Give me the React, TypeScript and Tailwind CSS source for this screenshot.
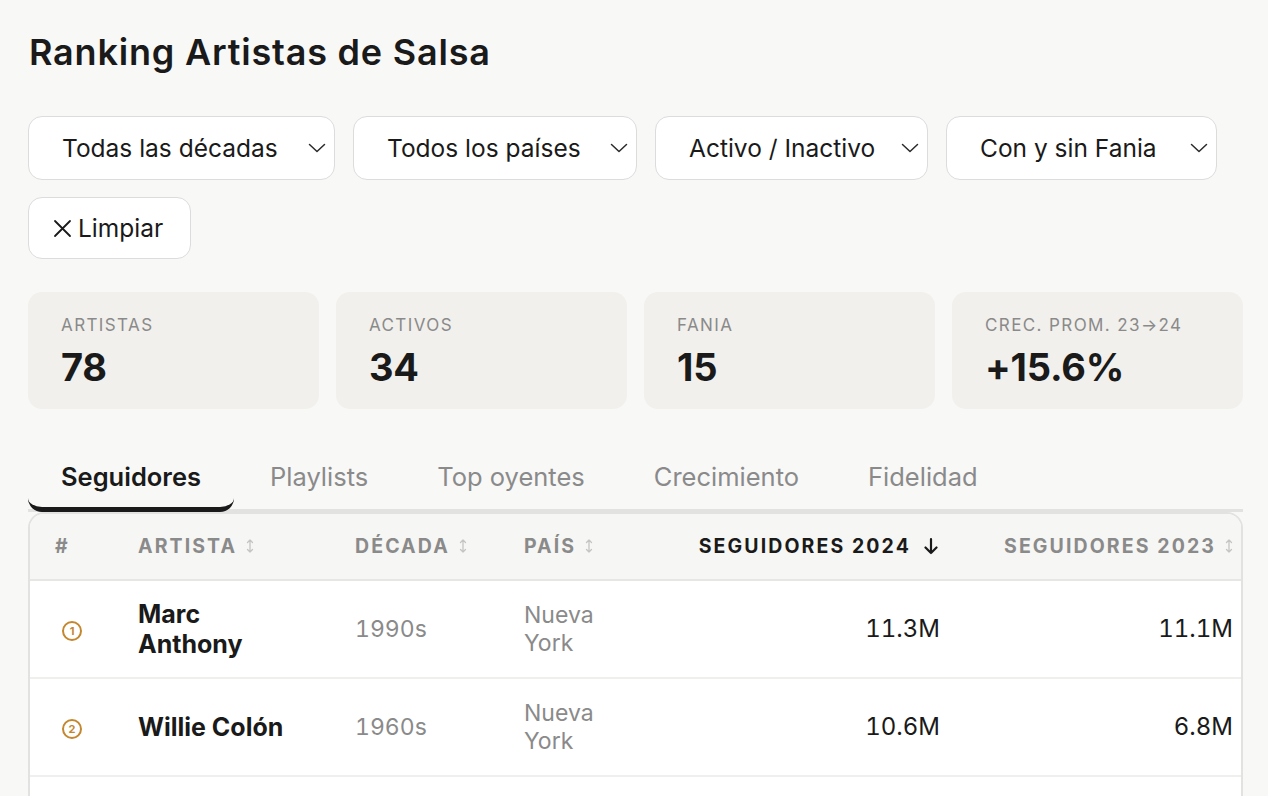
import React from "react";

const Chevron = () => (
  <svg width="18" height="10" viewBox="0 0 18 10" fill="none" className="shrink-0">
    <path d="M1.5 1.5 L9 8.5 L16.5 1.5" stroke="#2a2a2a" strokeWidth="1.5" strokeLinecap="round" strokeLinejoin="round" />
  </svg>
);

const XIcon = () => (
  <svg width="19" height="19" viewBox="0 0 19 19" fill="none" className="shrink-0 mr-[6px]">
    <path d="M2 2 L17 17 M17 2 L2 17" stroke="#1a1a1a" strokeWidth="1.8" strokeLinecap="round" />
  </svg>
);

const SortIcon = () => (
  <svg width="8" height="16" viewBox="0 0 8 16" fill="none" className="inline-block ml-[9px] align-[-1px]">
    <path d="M4 2 V14 M1.5 4.5 L4 2 L6.5 4.5 M1.5 11.5 L4 14 L6.5 11.5" stroke="#c4c4c4" strokeWidth="1.3" strokeLinecap="round" strokeLinejoin="round" />
  </svg>
);

const DownArrow = () => (
  <svg width="14" height="18" viewBox="0 0 14 18" fill="none" className="inline-block ml-[13px] align-[-2px]">
    <path d="M7 2 V16 M1.5 10.5 L7 16 L12.5 10.5" stroke="#1a1a1a" strokeWidth="2.2" strokeLinecap="round" strokeLinejoin="round" />
  </svg>
);

const Rank = ({ n }: { n: number }) => (
  <span className="inline-flex items-center justify-center w-[20px] h-[20px] rounded-full border-[2.8px] border-[#c4872e] text-[#c4872e] text-[11px] font-bold leading-none">
    {n}
  </span>
);

const filters = [
  { label: "Todas las décadas", w: "w-[307px]" },
  { label: "Todos los países", w: "w-[284px]" },
  { label: "Activo / Inactivo", w: "w-[273px]" },
  { label: "Con y sin Fania", w: "w-[271px]" },
];

const stats = [
  { label: "ARTISTAS", value: "78" },
  { label: "ACTIVOS", value: "34" },
  { label: "FANIA", value: "15" },
  { label: "CREC. PROM. 23→24", value: "+15.6%" },
];

const tabs = ["Seguidores", "Playlists", "Top oyentes", "Crecimiento", "Fidelidad"];

const rows = [
  { rank: 1, name: "Marc Anthony", decade: "1990s", country: "Nueva York", s24: "11.3M", s23: "11.1M" },
  { rank: 2, name: "Willie Colón", decade: "1960s", country: "Nueva York", s24: "10.6M", s23: "6.8M" },
  { rank: 3, name: "Héctor Lavoe", decade: "1960s", country: "Puerto Rico", s24: "9.8M", s23: "8.2M" },
];

const th = "text-[19.5px] font-bold tracking-[2.1px] whitespace-nowrap";

export default function App() {
  return (
    <div
      className="min-h-screen w-[1268px] h-[796px] overflow-hidden bg-[#f8f8f7] text-[#1a1a1a] pl-[28px] pr-[25px] pt-[30px]"
      style={{ fontFamily: "Inter, 'Noto Sans', sans-serif" }}
    >
      <h1 className="text-[36px] font-semibold leading-[44px] tracking-[0.8px] pl-[1px]">Ranking Artistas de Salsa</h1>

      <div className="flex flex-wrap gap-x-[18px] gap-y-[17px] mt-[42px]">
        {filters.map((f) => (
          <div
            key={f.label}
            className={`${f.w} h-[64px] bg-white border-[1.5px] border-[#dcdcdc] rounded-[14px] flex items-center pl-[33px] pr-[8px]`}
          >
            <span className="text-[24.5px] leading-none text-[#1a1a1a] whitespace-nowrap">{f.label}</span>
            <span className="ml-auto"><Chevron /></span>
          </div>
        ))}
        <div className="w-[163px] h-[62px] bg-white border-[1.5px] border-[#dcdcdc] rounded-[14px] flex items-center pl-[24px]">
          <XIcon />
          <span className="text-[24.5px] leading-none whitespace-nowrap">Limpiar</span>
        </div>
      </div>

      <div className="grid grid-cols-4 gap-[17px] mt-[33px] w-[1215px]">
        {stats.map((s) => (
          <div key={s.label} className="h-[117px] bg-[#f1f0ec] rounded-[14px] pl-[33px] pt-[22px]">
            <div className="text-[17px] leading-[22px] tracking-[1.4px] text-[#8a8a8a]">{s.label}</div>
            <div className="text-[38px] font-bold leading-[46px] mt-[8px] tracking-[-0.2px]">{s.value}</div>
          </div>
        ))}
      </div>

      <div className="w-[1215px] mt-[47px] flex gap-[3px] border-b-[3px] border-[#e2e2e0]">
        {tabs.map((t, i) => (
          <div
            key={t}
            className={
              i === 0
                ? "px-[33px] pt-[6px] pb-[12px] text-[25.5px] leading-[30px] font-semibold text-[#1a1a1a] border-b-[5px] border-[#1a1a1a] rounded-[14px] -mb-[3px]"
                : "px-[33px] pt-[6px] pb-[17px] text-[25.5px] leading-[30px] text-[#8a8a8a]"
            }
          >
            {t}
          </div>
        ))}
      </div>

      <div className="w-[1215px] border-[2px] border-[#e2e2e0] rounded-t-[16px] overflow-hidden bg-white">
        <table className="table-fixed border-collapse w-[1229px]">
          <colgroup>
            <col className="w-[80px]" />
            <col className="w-[217px]" />
            <col className="w-[170px]" />
            <col className="w-[134px]" />
            <col className="w-[331px]" />
            <col className="w-[297px]" />
          </colgroup>
          <thead>
            <tr className="bg-[#f6f6f4] border-b-[2px] border-[#e6e6e4] h-[66px]">
              <th className={`text-left pl-[25px] text-[#8a8a8a] ${th}`}>#</th>
              <th className={`text-left pl-[28px] text-[#8a8a8a] ${th}`}>ARTISTA<SortIcon /></th>
              <th className={`text-left pl-[28px] text-[#8a8a8a] ${th}`}>DÉCADA<SortIcon /></th>
              <th className={`text-left pl-[27px] text-[#8a8a8a] ${th}`}>PAÍS<SortIcon /></th>
              <th className={`text-right pr-[24px] text-[#1a1a1a] ${th}`}>SEGUIDORES 2024<DownArrow /></th>
              <th className={`text-right pr-[26px] text-[#8a8a8a] ${th}`}>SEGUIDORES 2023<SortIcon /></th>
            </tr>
          </thead>
          <tbody>
            {rows.map((r) => (
              <tr key={r.rank} className="border-b-[2px] border-[#efefee]">
                <td className="pl-[32px] py-[18px] align-middle"><Rank n={r.rank} /></td>
                <td className="pl-[28px] pr-[26px] py-[18px] text-[25px] leading-[30px] font-bold align-middle">{r.name}</td>
                <td className="pl-[28px] py-[18px] text-[23px] leading-[28px] text-[#8a8a8a] align-middle tabular-nums">{r.decade}</td>
                <td className="pl-[27px] pr-[27px] py-[20px] text-[23px] leading-[28px] text-[#8a8a8a] align-middle">{r.country}</td>
                <td className="pr-[22px] py-[18px] text-[24px] leading-[30px] text-right align-middle tabular-nums">{r.s24}</td>
                <td className="pr-[26px] py-[18px] text-[24px] leading-[30px] text-right align-middle tabular-nums">{r.s23}</td>
              </tr>
            ))}
          </tbody>
        </table>
      </div>
    </div>
  );
}
